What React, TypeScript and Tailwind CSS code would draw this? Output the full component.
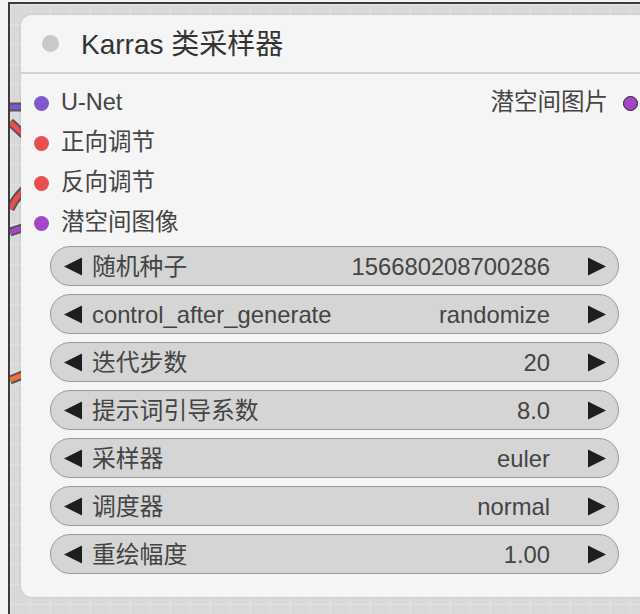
import React from "react";

const FONT = { fontFamily: '"Liberation Sans", "Noto Sans CJK SC", sans-serif' };

const widgets: [string, string][] = [
  ["随机种子", "156680208700286"],
  ["control_after_generate", "randomize"],
  ["迭代步数", "20"],
  ["提示词引导系数", "8.0"],
  ["采样器", "euler"],
  ["调度器", "normal"],
  ["重绘幅度", "1.00"],
];

const inputs: [string, string][] = [
  ["U-Net", "bg-[#7f58c9]"],
  ["正向调节", "bg-[#ea4f4f]"],
  ["反向调节", "bg-[#ea4f4f]"],
  ["潜空间图像", "bg-[#a646c6]"],
];

function Arrow({ dir }: { dir: "l" | "r" }) {
  return (
    <svg width="20" height="19" viewBox="0 0 20 19" className="shrink-0">
      {dir === "l" ? (
        <polygon points="19,0.5 19,18.5 1,9.5" fill="#1e1e1e" />
      ) : (
        <polygon points="1,0.5 1,18.5 19,9.5" fill="#1e1e1e" />
      )}
    </svg>
  );
}

export default function App() {
  return (
    <div
      className="w-[640px] h-[614px] overflow-hidden bg-[#f3f3f3] pl-[8px] pt-[2px] flex"
      style={FONT}
    >
      <div className="relative flex-1 border-l-2 border-t-2 border-[#3c3c3c] bg-[#d9d9d9] bg-[linear-gradient(to_right,#e2e2e2_1px,transparent_1px),linear-gradient(to_bottom,#e2e2e2_1px,transparent_1px)] bg-size-[20px_20px] pl-[11px] pt-[11px]">
        <svg className="absolute left-0 top-0" width="30" height="400" viewBox="0 0 30 400">
          <g fill="none" strokeLinecap="butt">
            <path d="M0 103 L25 103" stroke="#555" strokeWidth="9" />
            <path d="M0 103 L25 103" stroke="#7f58c9" strokeWidth="5" />
            <path d="M0 118 L25 141" stroke="#555" strokeWidth="9" />
            <path d="M0 118 L25 141" stroke="#ea4f4f" strokeWidth="5" />
            <path d="M0 205 Q8 188 25 178" stroke="#555" strokeWidth="9" />
            <path d="M0 205 Q8 188 25 178" stroke="#ea4f4f" strokeWidth="5" />
            <path d="M0 228 L25 220" stroke="#555" strokeWidth="9" />
            <path d="M0 228 L25 220" stroke="#a646c6" strokeWidth="5" />
            <path d="M0 376 L25 366" stroke="#555" strokeWidth="9" />
            <path d="M0 376 L25 366" stroke="#f0703a" strokeWidth="5" />
          </g>
        </svg>
        <div className="relative w-[630px] h-[582px] rounded-[11px] bg-[#f5f5f5] shadow-[0_0_3px_rgba(0,0,0,0.12)] flex flex-col">
          <div className="h-[59px] flex items-center pl-[21px] border-b-2 border-[#d2d2d2]">
            <div className="w-[17px] h-[17px] rounded-full bg-[#c9c9c9]" />
            <div className="ml-[22px] mt-[3px] text-[28px] text-[#333] leading-none">Karras 类采样器</div>
          </div>
          <div className="pt-[9px] flex">
            <div className="flex-1 flex flex-col">
              {inputs.map(([label, color]) => (
                <div key={label} className="h-[40px] flex items-center pl-[13px]">
                  <div className={`w-[15px] h-[15px] rounded-full ${color}`} />
                  <div className="ml-[12px] text-[23.5px] text-[#444] leading-none">{label}</div>
                </div>
              ))}
            </div>
            <div className="h-[40px] flex items-center pr-[13px]">
              <div className="text-[23.5px] text-[#444] leading-none">潜空间图片</div>
              <div className="ml-[15px] w-[15px] h-[15px] rounded-full bg-[#a646c6] border-[1.5px] border-[#222]" />
            </div>
          </div>
          <div className="mt-[3px] pl-[29px] pr-[32px] flex flex-col gap-[8px]">
            {widgets.map(([label, value]) => (
              <div
                key={label}
                className="h-[40px] rounded-full bg-[#d5d5d5] border-[1.5px] border-[#9a9a9a] flex items-center pl-[12px] pr-[11px] text-[23.8px] text-[#444] leading-none"
              >
                <Arrow dir="l" />
                <span className="ml-[9px] mt-[2px]">{label}</span>
                <span className="ml-auto mt-[2px]">{value}</span>
                <span className="ml-[37px]">
                  <Arrow dir="r" />
                </span>
              </div>
            ))}
          </div>
        </div>
      </div>
    </div>
  );
}
